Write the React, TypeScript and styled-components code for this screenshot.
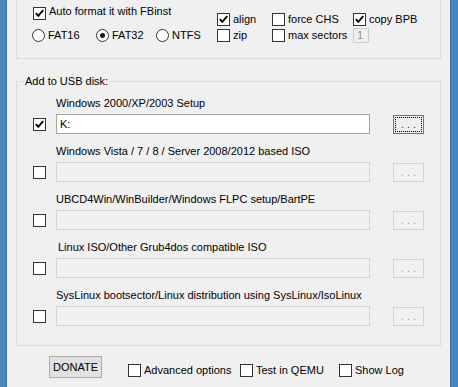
import React from "react";
import styled, { createGlobalStyle } from "styled-components";

const GlobalStyle = createGlobalStyle`
  html, body { margin: 0; padding: 0; background: #f0f0f0; }
  body {
    font-family: "Liberation Sans", Arial, sans-serif;
    font-size: 11px;
    color: #000;
  }
  * { box-sizing: border-box; }
`;

const Window = styled.div`
  display: flex;
  width: 458px;
  height: 387px;
  overflow: hidden;
  background: #f0f0f0;
`;

const Frame = styled.div<{ $w: number; $side: "left" | "right" }>`
  width: ${(p) => p.$w}px;
  flex: none;
  background: #4b86b9;
  ${(p) =>
    p.$side === "left"
      ? "border-right: 1px solid #3f76a6;"
      : "border-left: 1px solid #3f76a6;"}
`;

const Content = styled.div`
  flex: 1;
  display: flex;
  flex-direction: column;
  padding: 0 9px;
`;

const TopGroup = styled.div`
  height: 59px;
  border: 1px solid #dcdcdc;
  border-top: none;
  display: flex;
  align-items: flex-start;
  padding-left: 16px;
`;

const LeftCol = styled.div`
  width: 184px;
  display: flex;
  flex-direction: column;
  padding-top: 5px;
`;

const RadioRow = styled.div`
  display: flex;
  margin-top: 6px;
  margin-left: -1px;
`;

const RightGrid = styled.div`
  display: grid;
  grid-template-columns: 55px 81px auto;
  grid-auto-rows: 16px;
  margin-top: 11px;
`;

const OptionLabel = styled.label<{ $w?: number; $mt?: number }>`
  display: flex;
  align-items: center;
  gap: 3px;
  height: 16px;
  white-space: nowrap;
  ${(p) => (p.$w ? `width: ${p.$w}px;` : "")}
  ${(p) => (p.$mt ? `margin-top: ${p.$mt}px;` : "")}
`;

const OptionText = styled.span<{ $lift?: number }>`
  line-height: 13px;
  ${(p) => (p.$lift ? `position: relative; top: -${p.$lift}px;` : "")}
`;

const Box = styled.span`
  width: 13px;
  height: 13px;
  flex: none;
  border: 1px solid #333;
  background: #fff;
  display: flex;
  align-items: center;
  justify-content: center;
`;

const RadioCircle = styled.span`
  width: 13px;
  height: 13px;
  flex: none;
  border: 1px solid #333;
  border-radius: 50%;
  background: #fff;
  display: flex;
  align-items: center;
  justify-content: center;
`;

const RadioDot = styled.span`
  width: 5px;
  height: 5px;
  border-radius: 50%;
  background: #1a1a1a;
`;

const SmallField = styled.span`
  width: 16px;
  height: 15px;
  border: 1px solid #cccccc;
  background: #f0f0f0;
  color: #8d8d8d;
  padding-left: 3px;
  line-height: 13px;
`;

const CheckMark = () => (
  <svg width="11" height="11" viewBox="0 0 11 11">
    <polyline
      points="1.8,5.2 4.3,7.8 9.2,2.2"
      fill="none"
      stroke="#000"
      strokeWidth="1.9"
    />
  </svg>
);

const Check: React.FC<{
  checked?: boolean;
  text: string;
  w?: number;
  mt?: number;
  lift?: number;
}> = ({ checked, text, w, mt, lift }) => (
  <OptionLabel $w={w} $mt={mt}>
    <Box>{checked && <CheckMark />}</Box>
    <OptionText $lift={lift}>{text}</OptionText>
  </OptionLabel>
);

const Radio: React.FC<{ checked?: boolean; text: string; w?: number }> = ({
  checked,
  text,
  w,
}) => (
  <OptionLabel $w={w}>
    <RadioCircle>{checked && <RadioDot />}</RadioCircle>
    <OptionText>{text}</OptionText>
  </OptionLabel>
);

const UsbGroup = styled.div`
  position: relative;
  margin-top: 22px;
  border: 1px solid #dcdcdc;
  padding: 15px 0 8px 0;
`;

const Legend = styled.span`
  position: absolute;
  top: -7px;
  left: 7px;
  padding: 0 1px;
  background: #f0f0f0;
  line-height: 13px;
`;

const UsbRow = styled.div`
  display: grid;
  grid-template-columns: 16px 13px 10px 314px 23px 31px;
  grid-template-rows: 13px 20px;
  row-gap: 4px;
  margin-bottom: 11px;
`;

const RowLabel = styled.div<{ $indent?: number }>`
  grid-column: 4 / 7;
  grid-row: 1;
  line-height: 13px;
  white-space: nowrap;
  padding-left: ${(p) => p.$indent ?? 0}px;
`;

const RowBox = styled.div`
  grid-column: 2;
  grid-row: 2;
  align-self: center;
  display: flex;
`;

const PathField = styled.div<{ $enabled?: boolean }>`
  grid-column: 4;
  grid-row: 2;
  height: 20px;
  border: 1px solid ${(p) => (p.$enabled ? "#a5a5a5" : "#d3d3d3")};
  background: ${(p) => (p.$enabled ? "#fff" : "#f0f0f0")};
  padding-left: 3px;
  line-height: 18px;
`;

const BrowseButton = styled.div<{ $focused?: boolean }>`
  grid-column: 6;
  grid-row: 2;
  height: 19px;
  margin-top: 1px;
  border: 1px solid ${(p) => (p.$focused ? "#2f86dd" : "#d0d0d0")};
  background: ${(p) => (p.$focused ? "#eeeeee" : "#f0f0f0")};
  color: ${(p) => (p.$focused ? "#7a0f76" : "#c98cc2")};
  display: flex;
  justify-content: center;
  align-items: center;
  letter-spacing: 3px;
  padding-left: 3px;
  line-height: 13px;
  ${(p) => (p.$focused ? "outline: 1px dotted #000; outline-offset: -3px;" : "")}
`;

const BottomRow = styled.div`
  display: flex;
  align-items: flex-start;
  padding-left: 33px;
  margin-top: 10px;
`;

const DonateButton = styled.div`
  width: 53px;
  height: 22px;
  border: 1px solid #adadad;
  background: #e1e1e1;
  display: flex;
  align-items: center;
  justify-content: center;
  margin-right: 26px;
  line-height: 13px;
`;

type Row = {
  label: string;
  checked?: boolean;
  value?: string;
  enabled?: boolean;
  indent?: number;
};

const rows: Row[] = [
  { label: "Windows 2000/XP/2003 Setup", checked: true, value: "K:", enabled: true },
  { label: "Windows Vista / 7 / 8 / Server 2008/2012 based ISO" },
  { label: "UBCD4Win/WinBuilder/Windows FLPC setup/BartPE" },
  { label: "Linux ISO/Other Grub4dos compatible ISO", indent: 2 },
  { label: "SysLinux bootsector/Linux distribution using SysLinux/IsoLinux" },
];

export default function App() {
  return (
    <>
      <GlobalStyle />
      <Window>
        <Frame $w={7} $side="left" />
        <Content>
          <TopGroup>
            <LeftCol>
              <Check checked text="Auto format it with FBinst" lift={2} />
              <RadioRow>
                <Radio text="FAT16" w={64} />
                <Radio checked text="FAT32" w={60} />
                <Radio text="NTFS" />
              </RadioRow>
            </LeftCol>
            <RightGrid>
              <Check checked text="align" />
              <Check text="force CHS" />
              <Check checked text="copy BPB" />
              <Check text="zip" />
              <Check text="max sectors" />
              <OptionLabel>
                <SmallField>1</SmallField>
              </OptionLabel>
            </RightGrid>
          </TopGroup>

          <UsbGroup>
            <Legend>Add to USB disk:</Legend>
            {rows.map((r) => (
              <UsbRow key={r.label}>
                <RowLabel $indent={r.indent}>{r.label}</RowLabel>
                <RowBox>
                  <Box>{r.checked && <CheckMark />}</Box>
                </RowBox>
                <PathField $enabled={r.enabled}>{r.value}</PathField>
                <BrowseButton $focused={r.enabled}>...</BrowseButton>
              </UsbRow>
            ))}
          </UsbGroup>

          <BottomRow>
            <DonateButton>DONATE</DonateButton>
            <Check text="Advanced options" w={112} mt={6} />
            <Check text="Test in QEMU" w={99} mt={6} />
            <Check text="Show Log" mt={6} />
          </BottomRow>
        </Content>
        <Frame $w={8} $side="right" />
      </Window>
    </>
  );
}
